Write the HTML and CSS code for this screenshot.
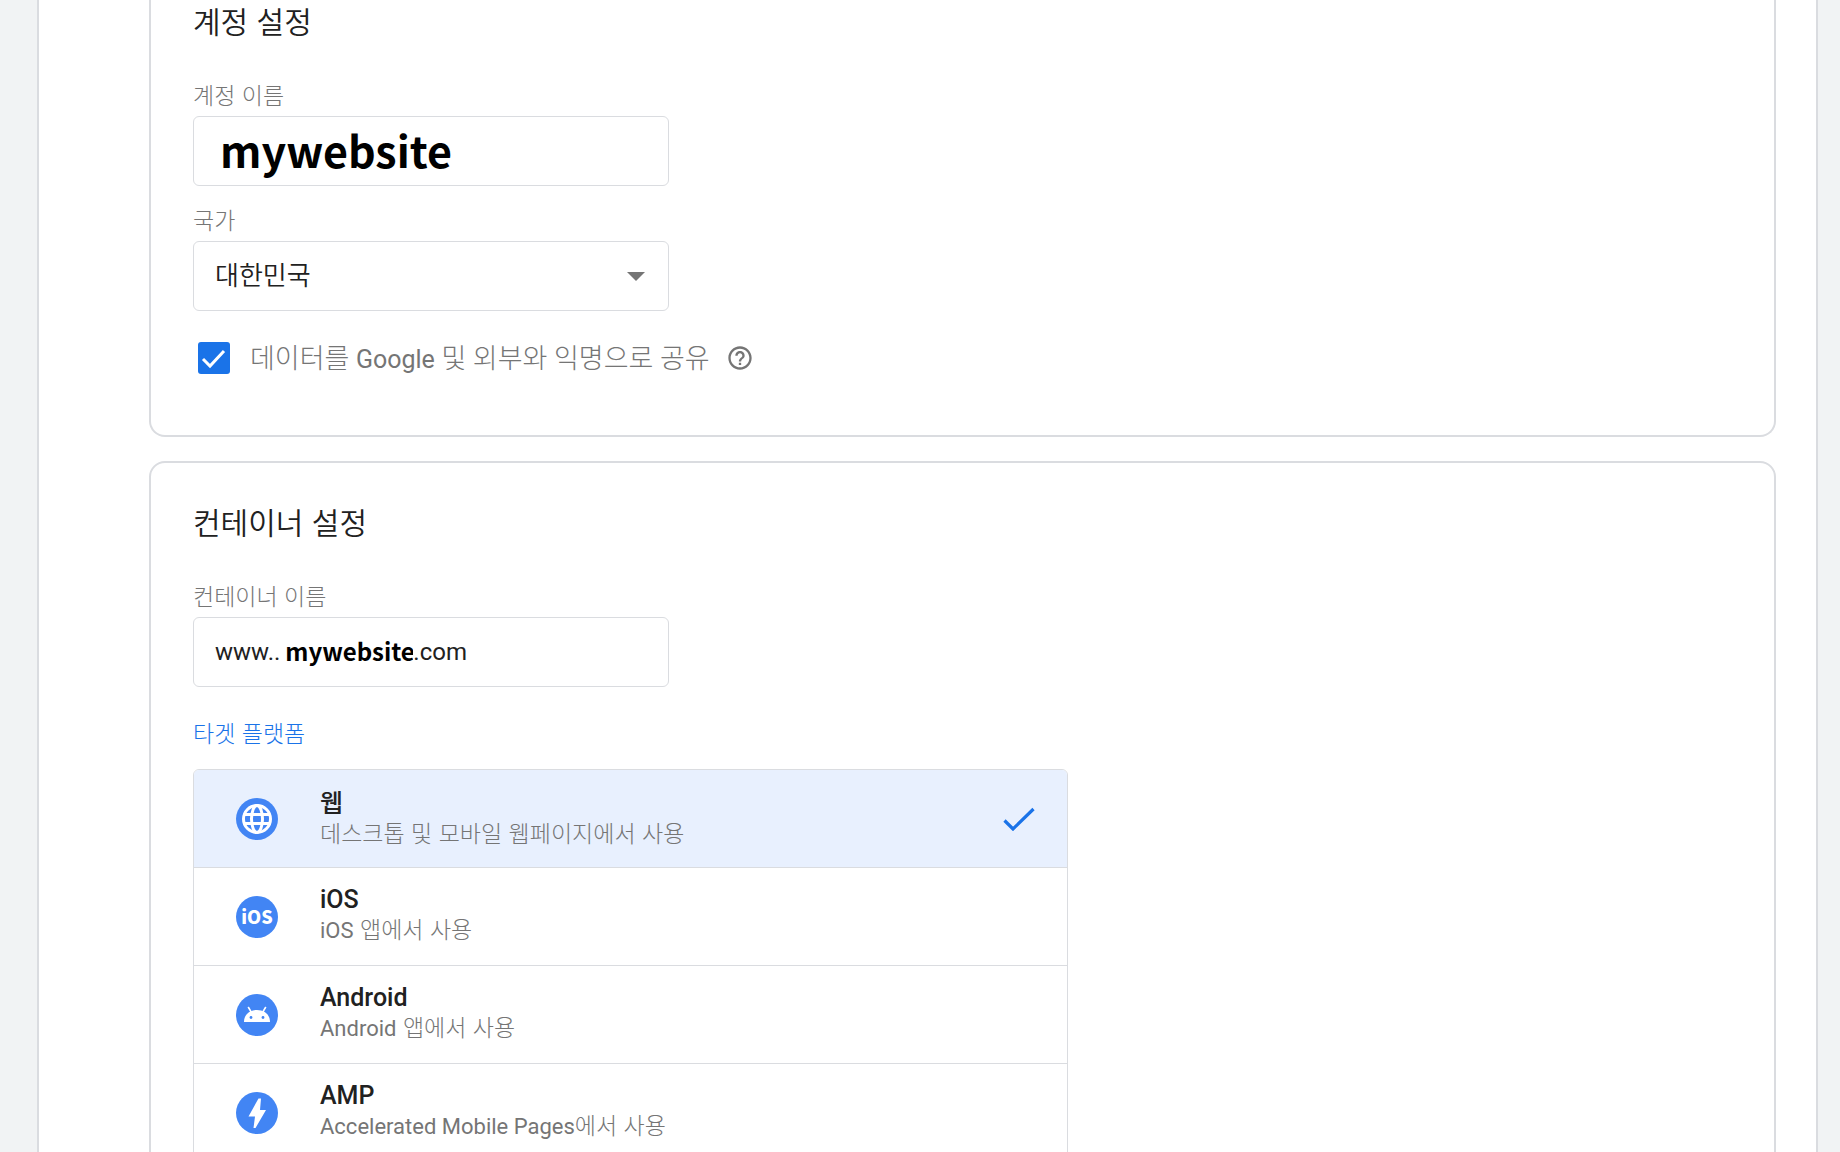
FILE: index.html
```html
<!DOCTYPE html>
<html lang="ko">
<head>
  <meta charset="UTF-8">
  <title>계정 설정</title>
  <link rel="stylesheet" href="styles.css">
</head>
<body>
<form class="page">
  <section class="card card-account">
    <h2 class="card-title">계정 설정</h2>

    <label class="field-label" for="account">계정 이름</label>
    <input class="field field-large" id="account" type="text" value="mywebsite">

    <label class="field-label field-next" for="country">국가</label>
    <div class="select-wrap">
      <select class="field" id="country">
        <option>대한민국</option>
      </select>
      <svg class="select-arrow" width="18" height="9" viewBox="0 0 18 9"><path d="M0 0h18L9 9z" fill="#757575"/></svg>
    </div>

    <div class="share">
      <input class="share-box" id="share" type="checkbox" checked>
      <label class="share-label" for="share">데이터를 <span class="share-latin">Google</span> 및 외부와 익명으로 공유</label>
      <svg class="share-help" width="28" height="28" viewBox="0 0 24 24"><path fill="#757575" d="M11 18h2v-2h-2v2zm1-16C6.480 2 2 6.480 2 12s4.480 10 10 10 10-4.480 10-10S17.520 2 12 2zm0 18c-4.410 0-8-3.590-8-8s3.590-8 8-8 8 3.590 8 8-3.590 8-8 8zm0-14c-2.210 0-4 1.790-4 4h2c0-1.100.9-2 2-2s2 .9 2 2c0 2-3 1.750-3 5h2c0-2.250 3-2.500 3-5 0-2.210-1.790-4-4-4z"/></svg>
    </div>
  </section>

  <section class="card card-container">
    <h2 class="card-title">컨테이너 설정</h2>

    <label class="field-label" for="container">컨테이너 이름</label>
    <div class="field field-group">
      <span class="field-prefix">www..</span>
      <input class="field-inner" id="container" type="text" value="mywebsite">
      <span>.com</span>
    </div>

    <fieldset class="platforms">
      <legend class="field-label platforms-label">타겟 플랫폼</legend>
      <div class="platform-list">
        <label class="platform">
          <input class="platform-radio" type="radio" name="platform" checked>
          <svg class="platform-icon" viewBox="0 0 42 42">
            <circle cx="21" cy="21" r="21" fill="#4285f4"/>
            <g fill="none" stroke="#fff" stroke-width="3">
              <circle cx="21" cy="21" r="13.500"/>
              <ellipse cx="21" cy="21" rx="5.500" ry="13.500"/>
              <path d="M9 16.500h24M9 25.500h24"/>
            </g>
          </svg>
          <span class="platform-text">
            <span class="platform-name">웹</span>
            <span class="platform-desc">데스크톱 및 모바일 웹페이지에서 사용</span>
          </span>
          <svg class="platform-check" width="32" height="24" viewBox="0 0 32 24"><path d="M1.500 13.500l8.500 8.500L30.500 2" fill="none" stroke="#1a73e8" stroke-width="3.200"/></svg>
        </label>
        <label class="platform">
          <input class="platform-radio" type="radio" name="platform">
          <svg class="platform-icon" viewBox="0 0 42 42">
            <circle cx="21" cy="21" r="21" fill="#4285f4"/>
            <text class="ios-mark" x="21" y="28" text-anchor="middle">iOS</text>
          </svg>
          <span class="platform-text">
            <span class="platform-name">iOS</span>
            <span class="platform-desc"><span class="latin">iOS</span> 앱에서 사용</span>
          </span>
        </label>
        <label class="platform">
          <input class="platform-radio" type="radio" name="platform">
          <svg class="platform-icon" viewBox="0 0 42 42">
            <circle cx="21" cy="21" r="21" fill="#4285f4"/>
            <path d="M8 28c0-7.500 5.800-12 13-12s13 4.500 13 12z" fill="#fff"/>
            <path d="M12.500 13.500l3 5M29.500 13.500l-3 5" stroke="#fff" stroke-width="1.600" stroke-linecap="round"/>
            <circle cx="15" cy="23.500" r="1.400" fill="#4285f4"/>
            <circle cx="27" cy="23.500" r="1.400" fill="#4285f4"/>
          </svg>
          <span class="platform-text">
            <span class="platform-name">Android</span>
            <span class="platform-desc"><span class="latin">Android</span> 앱에서 사용</span>
          </span>
        </label>
        <label class="platform">
          <input class="platform-radio" type="radio" name="platform">
          <svg class="platform-icon" viewBox="0 0 42 42">
            <circle cx="21" cy="21" r="21" fill="#4285f4"/>
            <path d="M22.500 6.500h2.500l-1 11.500h6L19.500 36H17.500l1.500-11.500h-6.500z" fill="#fff"/>
          </svg>
          <span class="platform-text">
            <span class="platform-name">AMP</span>
            <span class="platform-desc"><span class="latin">Accelerated Mobile Pages</span>에서 사용</span>
          </span>
        </label>
      </div>
    </fieldset>
  </section>
</form>
</body>
</html>
```
FILE: styles.css
```css
* {
  box-sizing: border-box;
  margin: 0;
  padding: 0;
}

body {
  height: 100vh;
  overflow: hidden;
  padding: 0 22px 0 37px;
  background-color: #f1f3f4;
  color: #212121;
  font-family: Roboto, "Noto Sans CJK KR", sans-serif;
  font-size: 24px;
}

.page {
  min-height: 100vh;
  padding: 0 40px 0 110px;
  border: solid #dadce0;
  border-width: 0 2px;
  background-color: #fff;
}

.card {
  padding: 38px 42px 61px;
  border: 2px solid #dadce0;
  border-radius: 16px;
}

.card-account {
  padding-top: 0;
  border-top: 0;
  border-top-left-radius: 0;
  border-top-right-radius: 0;
}

.card-container {
  margin-top: 24px;
}

.card-title {
  margin-bottom: 39px;
  font-family: "Noto Sans CJK KR", sans-serif;
  font-size: 30px;
  font-weight: 350;
  line-height: 40px;
}

.field-label {
  display: block;
  margin-bottom: 7px;
  color: #757575;
  font-family: "Noto Sans CJK KR", sans-serif;
  font-size: 23px;
  font-weight: 300;
  line-height: 30px;
}

.field-next {
  margin-top: 18px;
}

/* 입력 필드 */
.field {
  display: block;
  width: 476px;
  height: 70px;
  padding: 0 21px;
  border: 1px solid #dadce0;
  border-radius: 6px;
  background-color: #fff;
  color: #212121;
  font-family: Roboto, "Noto Sans CJK KR", sans-serif;
  font-size: 24px;
}

.field-large {
  padding: 0 26px 4px;
  color: #000;
  font-family: "Noto Sans CJK KR", sans-serif;
  font-size: 43px;
  font-weight: 700;
}

.select-wrap {
  position: relative;
  width: 476px;
}

select.field {
  appearance: none;
  padding-bottom: 6px;
  font-family: "Noto Sans CJK KR", sans-serif;
  font-size: 26px;
  font-weight: 350;
}

.select-arrow {
  position: absolute;
  right: 24px;
  top: 31px;
  pointer-events: none;
}

.field-group {
  display: flex;
  align-items: center;
}

.field-prefix {
  margin-right: 5px;
}

.field-inner {
  width: 128px;
  height: 38px;
  padding-bottom: 4px;
  border: 0;
  outline: 0;
  color: #000;
  font-family: "Noto Sans CJK KR", sans-serif;
  font-size: 24px;
  font-weight: 700;
}

/* 데이터 공유 */
.share {
  display: flex;
  align-items: center;
  height: 32px;
  margin-top: 31px;
  padding-left: 5px;
}

.share-box {
  appearance: none;
  width: 32px;
  height: 32px;
  border-radius: 3px;
  background-color: #1a73e8;
}

.share-box:checked {
  background-image: url("data:image/svg+xml,%3Csvg xmlns='http://www.w3.org/2000/svg' viewBox='0 0 32 32'%3E%3Cpath d='M5 17l7 7L26 9' fill='none' stroke='%23fff' stroke-width='3'/%3E%3C/svg%3E");
}

.share-label {
  margin-left: 20px;
  padding-top: 2px;
  color: #757575;
  font-size: 27px;
  font-weight: 300;
  line-height: 32px;
}

.share-latin {
  font-size: 25px;
  font-weight: 400;
}

.share-help {
  margin-left: 16px;
}

/* 타겟 플랫폼 */
.platforms {
  margin-top: 30px;
  border: 0;
}

.platforms-label {
  margin-bottom: 22px;
  color: #1a73e8;
}

.platform-list {
  max-width: 875px;
  border: 1px solid #dadce0;
  border-radius: 6px;
  overflow: hidden;
}

.platform {
  display: flex;
  align-items: center;
  height: 98px;
  padding: 0 32px 0 42px;
  border-bottom: 1px solid #dadce0;
}

.platform:has(:checked) {
  background-color: #e8f0fe;
}

.platform-radio {
  appearance: none;
}

.platform-icon {
  flex: none;
  width: 42px;
  height: 42px;
}

.ios-mark {
  fill: #fff;
  font-family: "Noto Sans CJK KR", sans-serif;
  font-size: 18px;
  font-weight: 900;
}

.platform-text {
  flex: 1;
  margin-left: 42px;
  padding-bottom: 2px;
}

.platform-name,
.platform-desc {
  display: block;
  line-height: 28px;
}

.platform-name {
  font-size: 25px;
  font-weight: 500;
}

.platform-desc {
  color: #757575;
  font-family: "Noto Sans CJK KR", sans-serif;
  font-size: 23px;
  font-weight: 300;
}

.latin {
  font-family: Roboto, sans-serif;
  font-size: 22px;
  font-weight: 400;
}
```
